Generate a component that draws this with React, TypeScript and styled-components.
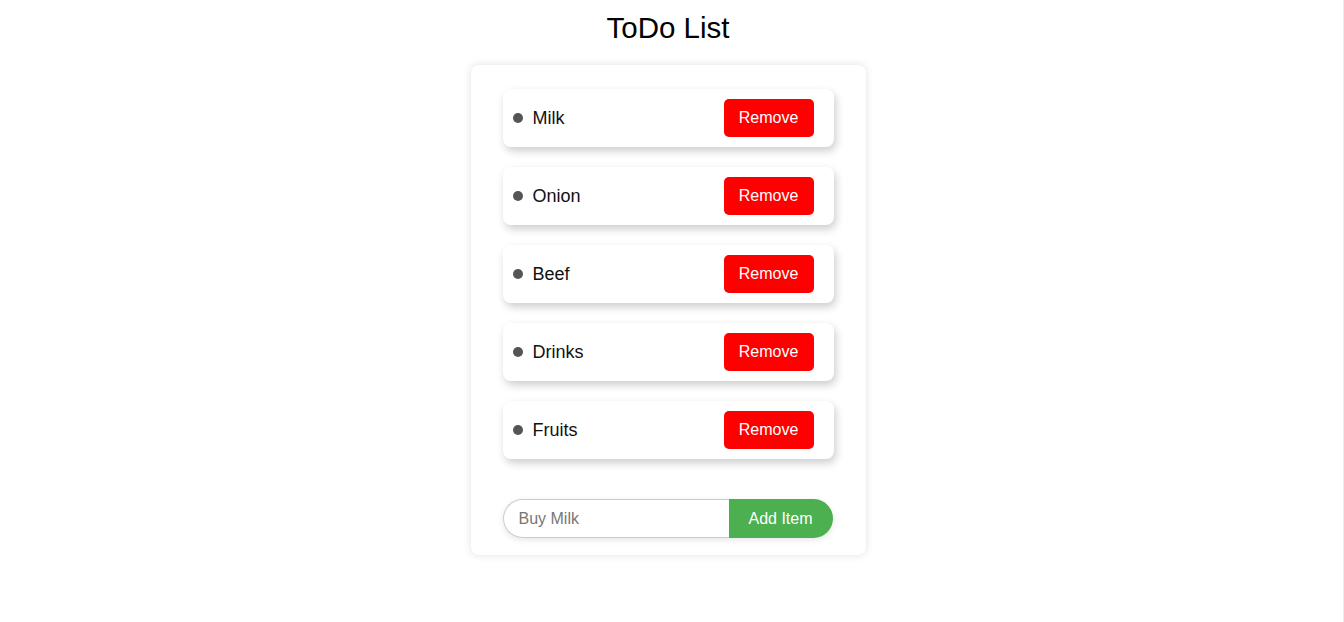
import React, { memo, useState } from 'react';
import styled, { createGlobalStyle } from 'styled-components';

const GlobalStyle = createGlobalStyle`
  html, body {
    margin: 0;
    padding: 0;
    background: #fff;
    font-family: "Liberation Sans", Arial, Helvetica, sans-serif;
  }
`

const Page = styled.div`
  width: 100%;
  min-height: 622px;
  display: flex;
  flex-direction: column;
  align-items: center;
  padding-right: 7px;
  border-right: 1px solid #ececec;
  box-sizing: border-box;
`

const Title = styled.h1`
  margin: 10px 0 0;
  height: 55px;
  font-size: 29.5px;
  font-weight: 400;
  line-height: 36px;
  color: #000;
`

const Card = styled.div`
  width: 395px;
  box-sizing: border-box;
  padding: 24px 32px 17px;
  background: #fff;
  border-radius: 8px;
  box-shadow: 0 0 8px rgba(0, 0, 0, 0.12);
`

const List = styled.ul`
  list-style: none;
  margin: 0;
  padding: 0;
  display: flex;
  flex-direction: column;
  gap: 20px;
`

const Item = styled.li`
  height: 58px;
  display: flex;
  align-items: center;
  padding: 0 20px 0 10px;
  border-radius: 8px;
  background: #fff;
  box-shadow: 2px 4px 8px rgba(0, 0, 0, 0.2);
`

const Dot = styled.span`
  width: 10px;
  height: 10px;
  border-radius: 50%;
  background: #555;
  margin-right: 10px;
`

const Label = styled.span`
  flex: 1;
  font-size: 18px;
  color: #111;
`

const RemoveButton = styled.button`
  width: 90px;
  height: 38px;
  border: none;
  border-radius: 5px;
  background: #ff0000;
  color: #fff;
  font-size: 16px;
  font-family: inherit;
  cursor: pointer;
`

const Form = styled.form`
  display: flex;
  margin-top: 40px;
  width: 330px;
  height: 39px;
  border-radius: 20px;
  box-shadow: 0 2px 6px rgba(0, 0, 0, 0.1);
`

const Input = styled.input`
  flex: 1;
  min-width: 0;
  box-sizing: border-box;
  height: 100%;
  padding: 0 15px;
  border: 1px solid #ccc;
  border-right: none;
  border-radius: 20px 0 0 20px;
  font-size: 16px;
  font-family: inherit;
  outline: none;

  &::placeholder {
    color: #777;
  }
`

const AddButton = styled.button`
  width: 104px;
  height: 100%;
  border: none;
  border-radius: 0 20px 20px 0;
  background: #4caf50;
  color: #fff;
  font-size: 16px;
  font-family: inherit;
  cursor: pointer;
`

export default memo(function App() {
  const [items, setItems] = useState(['Milk', 'Onion', 'Beef', 'Drinks', 'Fruits'])
  const [text, setText] = useState('')

  const add = (e: React.FormEvent) => {
    e.preventDefault()
    if (!text.trim()) return
    setItems([...items, text.trim()])
    setText('')
  }

  return (
    <>
      <GlobalStyle />
      <Page>
        <Title>ToDo List</Title>
        <Card>
          <List>
            {items.map((item, i) => (
              <Item key={item + i}>
                <Dot />
                <Label>{item}</Label>
                <RemoveButton onClick={() => setItems(items.filter((_, j) => j !== i))}>Remove</RemoveButton>
              </Item>
            ))}
          </List>
          <Form onSubmit={add}>
            <Input placeholder="Buy Milk" value={text} onChange={e => setText(e.target.value)} />
            <AddButton type="submit">Add Item</AddButton>
          </Form>
        </Card>
      </Page>
    </>
  )
})
